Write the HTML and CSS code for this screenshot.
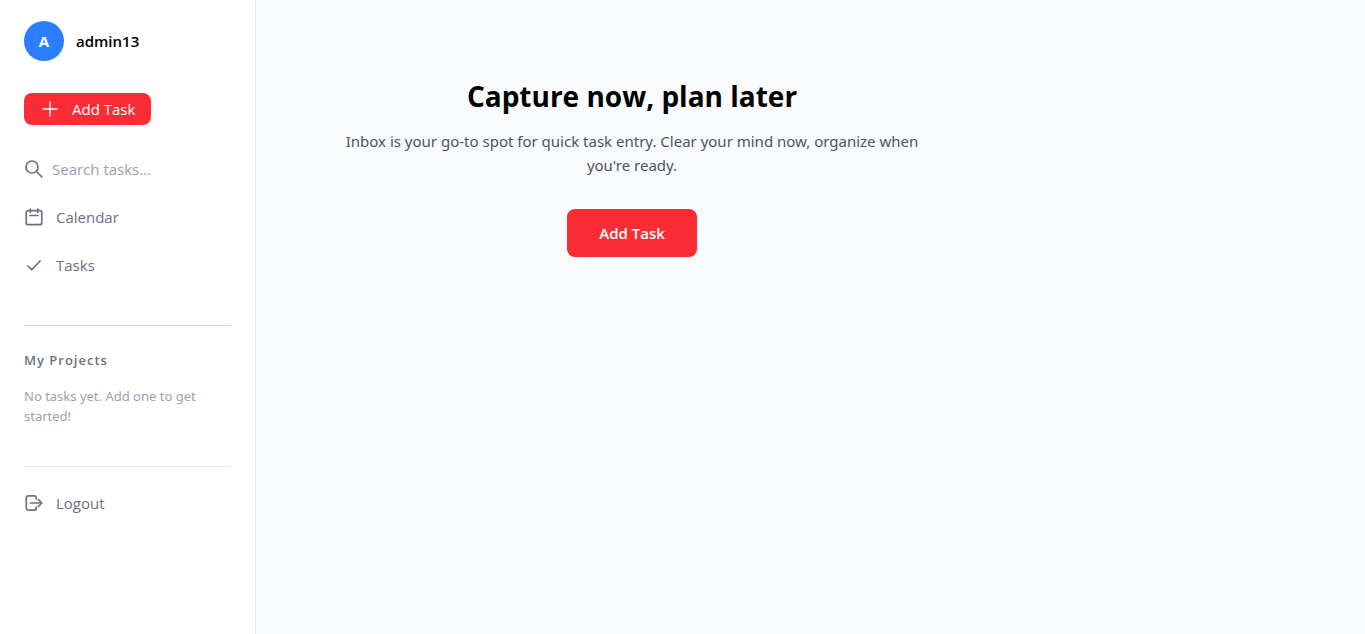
FILE: index.html
```html
<!DOCTYPE html>
<html lang="en">
<head>
<meta charset="utf-8">
<meta name="viewport" content="width=device-width, initial-scale=1">
<title>Inbox</title>
<link rel="stylesheet" href="styles.css">
</head>
<body>
<div class="app">
  <aside class="sidebar">
    <div class="profile">
      <span class="avatar">A</span>
      <span class="username">admin13</span>
    </div>
    <button class="add-button" type="button">
      <svg class="icon" viewBox="0 0 20 20" aria-hidden="true"><path d="M10 3v14M3 10h14"/></svg>
      Add Task
    </button>
    <label class="search">
      <svg class="icon icon-bold" viewBox="0 0 20 20" aria-hidden="true"><circle cx="8" cy="8" r="6"/><path d="M12.5 12.5l5.3 5.3"/></svg>
      <input class="search-input" type="text" placeholder="Search tasks..." aria-label="Search tasks">
    </label>
    <nav class="menu">
      <a class="menu-link" href="#calendar">
        <svg class="icon icon-bold" viewBox="0 0 20 20" aria-hidden="true"><rect x="2.2" y="3.7" width="15.6" height="14" rx="2"/><path d="M6.3 2v3.4M13.7 2v3.4M6 8.5h8"/></svg>
        Calendar
      </a>
      <a class="menu-link" href="#tasks">
        <svg class="icon icon-bold" viewBox="0 0 20 20" aria-hidden="true"><path d="M4 11l3.7 3.6 8.4-8.6"/></svg>
        Tasks
      </a>
    </nav>
    <section class="projects">
      <h2 class="projects-title">My Projects</h2>
      <p class="projects-empty">No tasks yet. Add one to get started!</p>
    </section>
    <div class="session">
      <button class="menu-link logout" type="button">
        <svg class="icon icon-bold" viewBox="0 0 20 20" aria-hidden="true"><path d="M12.2 6V4.8a2 2 0 0 0-2-2H4.3a2 2 0 0 0-2 2v10.4a2 2 0 0 0 2 2h5.9a2 2 0 0 0 2-2V14M6.5 10H17.5M14.5 6.7l3.3 3.3-3.3 3.3"/></svg>
        Logout
      </button>
    </div>
  </aside>
  <main class="content">
    <section class="empty">
      <h1 class="empty-title">Capture now, plan later</h1>
      <p class="empty-text">Inbox is your go-to spot for quick task entry. Clear your mind now, organize when you're ready.</p>
      <button class="primary-button" type="button">Add Task</button>
    </section>
  </main>
</div>
</body>
</html>
```
FILE: styles.css
```css
* {
  box-sizing: border-box;
}

body {
  margin: 0;
  font-family: "Segoe UI", "Open Sans", "Noto Sans", sans-serif;
  font-size: 15px;
  line-height: 24px;
  color: #000;
  background: #f9fafb;
}

h1,
h2,
p {
  margin: 0;
}

button,
input {
  font: inherit;
  border: 0;
  padding: 0;
}

button {
  cursor: pointer;
}

.app {
  display: flex;
  min-height: 100vh;
}

.sidebar {
  flex: 0 0 256px;
  min-width: 0;
  padding: 21px 24px;
  background: #fff;
  border-right: 1px solid #e5e7eb;
}

.profile {
  display: flex;
  align-items: center;
  gap: 12px;
  margin-bottom: 32px;
}

.avatar {
  display: grid;
  place-items: center;
  width: 40px;
  height: 40px;
  border-radius: 50%;
  background: #2b7fff;
  color: #fff;
  font-weight: 700;
}

.username {
  font-weight: 600;
}

.icon {
  flex: none;
  width: 20px;
  height: 20px;
  fill: none;
  stroke: currentColor;
  stroke-width: 1.3;
  stroke-linecap: round;
  stroke-linejoin: round;
}

.icon-bold {
  stroke-width: 1.7;
}

.add-button {
  display: flex;
  align-items: center;
  gap: 12px;
  margin-bottom: 32px;
  padding: 4px 16px;
  border-radius: 8px;
  background: #fb2c36;
  color: #fff;
}

.search {
  display: flex;
  align-items: center;
  gap: 8px;
  color: #6a7282;
}

.search-input {
  width: 100%;
  min-width: 0;
  height: 24px;
  background: transparent;
  color: inherit;
  outline: 0;
}

.search-input::placeholder {
  color: #99a1af;
  opacity: 1;
}

.menu {
  display: grid;
  gap: 24px;
  margin: 24px 0 48px;
}

.menu-link {
  display: flex;
  align-items: center;
  gap: 12px;
  color: #6a7282;
  text-decoration: none;
}

.projects {
  padding: 24px 0 40px;
  border-top: 1px solid #d1d5dc;
  line-height: 20px;
}

.projects-title {
  margin-bottom: 16px;
  font-size: 13px;
  font-weight: 600;
  letter-spacing: 1px;
  color: #6a7282;
}

.projects-empty {
  font-family: "Segoe UI", "Noto Sans", sans-serif;
  font-size: 13px;
  color: #99a1af;
}

.session {
  padding-top: 24px;
  border-top: 1px solid #e5e7eb;
}

.logout {
  background: transparent;
}

.content {
  flex: 1;
  min-width: 0;
  padding: 40px;
}

.empty {
  max-width: 672px;
  padding: 38px 32px;
  text-align: center;
}

.empty-title {
  margin-bottom: 15px;
  font-size: 28px;
  line-height: 36px;
  font-weight: 700;
}

.empty-text {
  margin-bottom: 32px;
  font-family: "Segoe UI", "Noto Sans", sans-serif;
  color: #4a5565;
}

.primary-button {
  padding: 12px 32px;
  border-radius: 8px;
  background: #fb2c36;
  color: #fff;
  font-weight: 600;
}
```
